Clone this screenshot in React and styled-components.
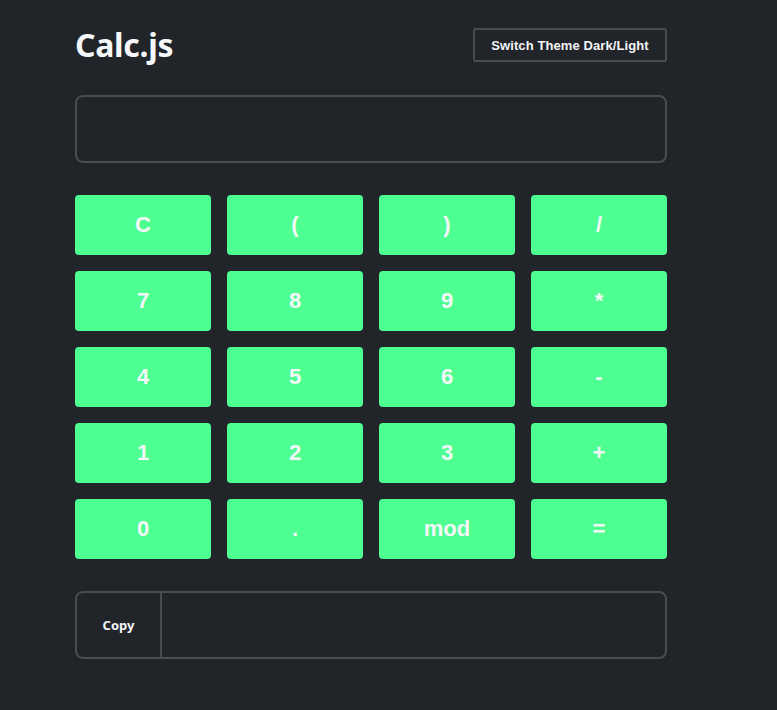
import React from "react";
import styled, { createGlobalStyle } from "styled-components";

const Global = createGlobalStyle`
  html, body { margin: 0; padding: 0; background: #212429; }
  body { font-family: "Liberation Sans", Arial, sans-serif; }
`;

const Page = styled.div`
  width: 592px;
  margin-left: 75px;
  padding-top: 28px;
  padding-bottom: 50px;
`;

const Header = styled.div`
  display: flex;
  justify-content: space-between;
  align-items: center;
  height: 34px;
`;

const Title = styled.h1`
  margin: 0;
  font-family: "Noto Sans", "Open Sans", sans-serif;
  font-weight: 700;
  font-size: 32px;
  color: #f5f7fa;
  letter-spacing: -0.3px;
  line-height: 34px;
`;

const ThemeButton = styled.button`
  height: 34px;
  width: 194px;
  background: transparent;
  border: 2px solid #4b4c4f;
  border-radius: 3px;
  color: #f3f5f8;
  font-family: "Liberation Sans", Arial, sans-serif;
  font-weight: 700;
  font-size: 13px;
  letter-spacing: 0.1px;
  cursor: pointer;
  padding: 0;
`;

const Display = styled.div`
  margin-top: 33px;
  height: 68px;
  box-sizing: border-box;
  border: 2px solid #4b4c4f;
  border-radius: 8px;
`;

const Keys = styled.div`
  margin-top: 32px;
  display: grid;
  grid-template-columns: repeat(4, 136px);
  grid-auto-rows: 60px;
  gap: 16px;
`;

const Key = styled.button`
  border: none;
  border-radius: 4px;
  background: #4eff92;
  color: #f4f6f8;
  font-family: "Liberation Sans", Arial, sans-serif;
  font-weight: 700;
  font-size: 22px;
  cursor: pointer;
  padding: 0;
`;

const CopyBar = styled.div`
  margin-top: 32px;
  height: 68px;
  box-sizing: border-box;
  border: 2px solid #4b4c4f;
  border-radius: 8px;
  display: flex;
`;

const CopyButton = styled.button`
  width: 85px;
  background: transparent;
  border: none;
  border-right: 2px solid #4b4c4f;
  color: #f3f5f8;
  font-family: "Noto Sans", "Open Sans", sans-serif;
  font-weight: 700;
  font-size: 13px;
  cursor: pointer;
  padding: 0;
`;

const Output = styled.div`
  flex: 1;
`;

const keys = ["C", "(", ")", "/", "7", "8", "9", "*", "4", "5", "6", "-", "1", "2", "3", "+", "0", ".", "mod", "="];

export default function App() {
  return (
    <>
      <Global />
      <Page>
        <Header>
          <Title>Calc.js</Title>
          <ThemeButton>Switch Theme Dark/Light</ThemeButton>
        </Header>
        <Display />
        <Keys>
          {keys.map((k) => (
            <Key key={k}>{k}</Key>
          ))}
        </Keys>
        <CopyBar>
          <CopyButton>Copy</CopyButton>
          <Output />
        </CopyBar>
      </Page>
    </>
  );
}
